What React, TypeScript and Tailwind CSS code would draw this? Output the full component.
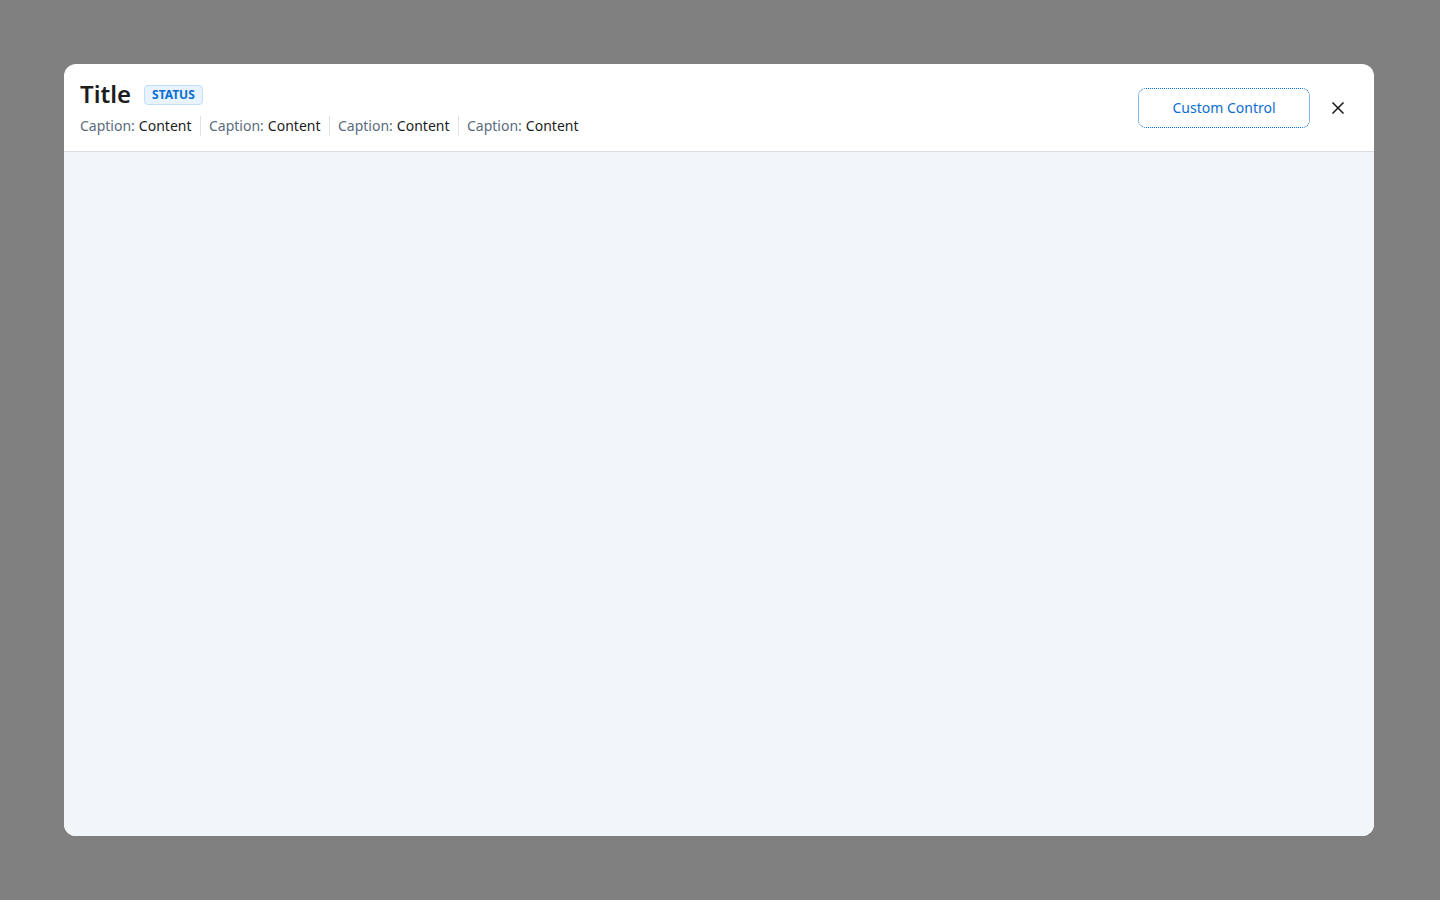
import { X } from "lucide-react";

const items = ["Content", "Content", "Content", "Content"];

export default function App() {
  return (
    <div
      className="flex h-[900px] w-[1440px] items-start bg-[#808080] pl-16 pt-16"
      style={{ fontFamily: '"Noto Sans", "Open Sans", sans-serif' }}
    >
      <div className="flex h-[772px] w-[1310px] flex-col overflow-hidden rounded-xl bg-white">
        <header className="flex items-center border-b border-[#d9dee4] pl-4 pr-4">
          <div className="flex flex-1 flex-col pb-[15px] pt-4">
            <div className="flex h-7 items-center gap-[13px]">
              <h1 className="text-[24px] font-semibold leading-7 text-[#1d1d1d]">Title</h1>
              <span className="mt-px rounded-[4px] border border-[#c2deff] bg-[#e8f3ff] px-[7px] text-[12px] font-bold leading-[18px] text-[#0a6ed1]">
                STATUS
              </span>
            </div>
            <div className="mt-2 flex h-5 items-center text-[14px] leading-5">
              {items.map((c, i) => (
                <div key={i} className="flex items-center">
                  {i > 0 && <div className="ml-2 mr-[8.5px] h-5 w-px bg-[#dde2e7]" />}
                  <span className="text-[#5b6b7d]">Caption:</span>
                  <span className="ml-1 text-[#1d1d1d]">{c}</span>
                </div>
              ))}
            </div>
          </div>
          <button className="flex h-10 w-[172px] items-center justify-center rounded-lg border border-dotted border-[#0a6ed1] text-[14px] text-[#0a6ed1]">
            Custom Control
          </button>
          <button className="ml-2 flex h-10 w-10 items-center justify-center text-[#1d1d1d]">
            <X className="h-5 w-5" strokeWidth={2} />
          </button>
        </header>
        <div className="flex-1 bg-[#f2f6fa]" />
      </div>
    </div>
  );
}
